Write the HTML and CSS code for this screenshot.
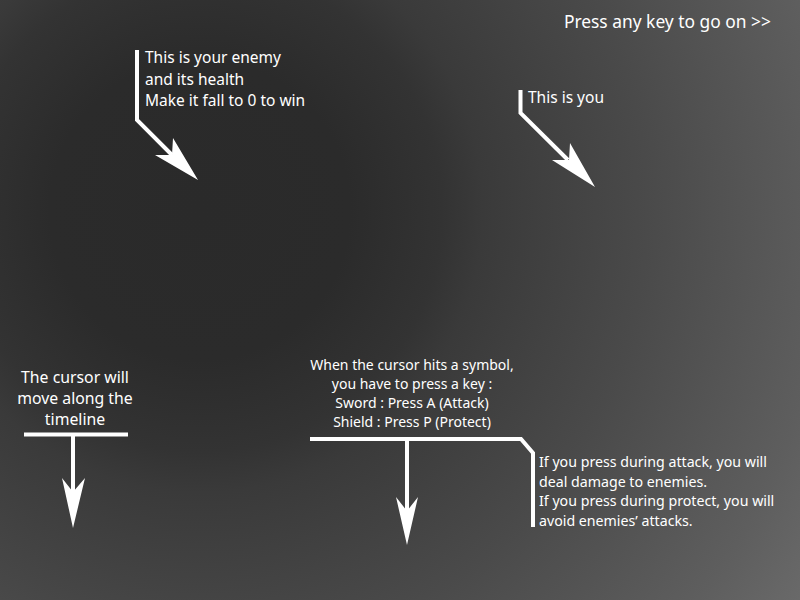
FILE: index.html
```html
<!DOCTYPE html>
<html lang="en">
<head>
<meta charset="utf-8">
<title>Tutorial</title>
<link rel="stylesheet" href="styles.css">
</head>
<body>
<div class="stage">
  <div class="hint hint-top">Press any key to go on &gt;&gt;</div>
  <div class="hint hint-enemy">This is your enemy<br>and its health<br>Make it fall to 0 to win</div>
  <div class="hint hint-you">This is you</div>
  <div class="hint hint-cursor">The cursor will<br>move along the<br>timeline</div>
  <div class="hint hint-symbol">When the cursor hits a symbol,<br>you have to press a key :<br>Sword : Press A (Attack)<br>Shield : Press P (Protect)</div>
  <div class="hint hint-press">If you press during attack, you will<br>deal damage to enemies.<br>If you press during protect, you will<br>avoid enemies’ attacks.</div>
  <svg class="arrows" width="800" height="600" viewBox="0 0 800 600" xmlns="http://www.w3.org/2000/svg">
    <g fill="none" stroke="#fff" stroke-width="4" stroke-linejoin="miter">
      <polyline points="137,50 137,120 172,155"/>
      <polyline points="520.5,90 520.5,113 568,160"/>
      <line x1="24" y1="434.5" x2="128" y2="434.5"/>
      <line x1="73" y1="434" x2="73" y2="495"/>
      <polyline points="310,439 521,439 533,453 533,527"/>
      <line x1="407" y1="439" x2="407" y2="512"/>
    </g>
    <g fill="#fff">
      <polygon points="198,180 155,155 172,155 173,138"/>
      <polygon points="595,187 552,160 569,160 570,143"/>
      <polygon points="73,528 62,478 73,492 85,478"/>
      <polygon points="407,545 396,497 407,511 418,497"/>
    </g>
  </svg>
</div>
</body>
</html>
```
FILE: styles.css
```css
html, body {
  margin: 0;
  padding: 0;
}
body {
  width: 800px;
  height: 600px;
  overflow: hidden;
  font-family: "Noto Sans", "DejaVu Sans", sans-serif;
  color: #fff;
}
.stage {
  position: relative;
  width: 800px;
  height: 600px;
  background: radial-gradient(circle at 200px 210px, #2a2a2a 0, #2b2b2b 150px, #333333 242px, #3a3a3a 283px, #4a4a4a 447px, #5e5e5e 632px, #6a6a6a 721px, #6c6c6c 800px);
}
.arrows {
  position: absolute;
  left: 0;
  top: 0;
}
.hint {
  position: absolute;
  white-space: nowrap;
}
.hint-top {
  right: 29px;
  top: 9px;
  font-size: 17.4px;
  line-height: 24px;
}
.hint-enemy {
  left: 145px;
  top: 47px;
  font-size: 15.5px;
  line-height: 21.5px;
}
.hint-you {
  left: 528px;
  top: 87px;
  font-size: 15.5px;
  line-height: 21.5px;
}
.hint-cursor {
  left: 0;
  width: 150px;
  top: 367px;
  font-size: 15.8px;
  line-height: 21px;
  text-align: center;
}
.hint-symbol {
  left: 297px;
  width: 230px;
  top: 355px;
  font-size: 14px;
  line-height: 19px;
  text-align: center;
}
.hint-press {
  left: 539px;
  top: 452px;
  font-size: 14.2px;
  line-height: 19.5px;
}
```
